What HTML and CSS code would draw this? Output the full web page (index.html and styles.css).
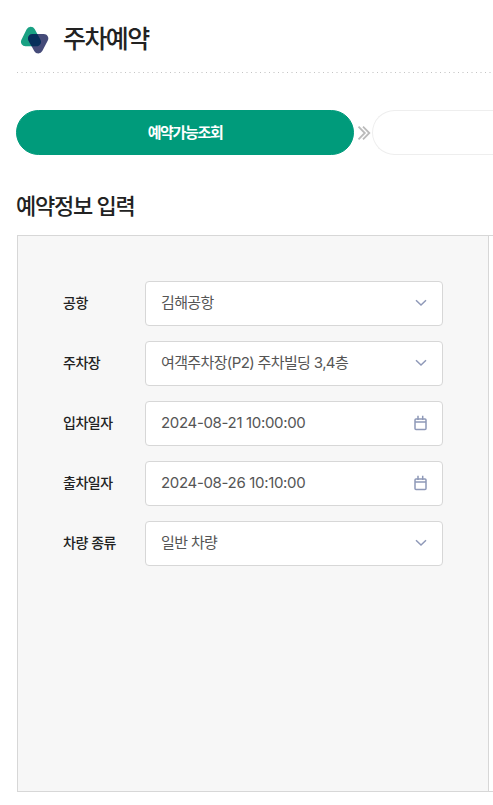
FILE: index.html
```
<!DOCTYPE html>
<html lang="ko">
<head>
    <meta charset="UTF-8" />
    <meta name="viewport" content="width=device-width, initial-scale=1.0" />
    <title>주차예약</title>
    <link rel="stylesheet" href="styles.css">
</head>
<body>
    <div class="container">
        <header class="header">
            <svg class="logo" width="30" height="31" viewBox="0 0 30 31">
                <defs>
                    <clipPath id="front"><path d="M12.500 11 H23.800 A4.500 4.500 0 0 1 27.800 17.600 L22.300 28.100 A4.500 4.500 0 0 1 14.360 28.200 L8.560 17.700 A4.500 4.500 0 0 1 12.500 11Z" /></clipPath>
                </defs>
                <path d="M1.450 16.800 L6.650 6.200 A4.500 4.500 0 0 1 14.650 6.040 L20.450 16.640 A4.500 4.500 0 0 1 16.500 23.300 H5.500 A4.500 4.500 0 0 1 1.450 16.800Z" fill="#19a183" />
                <path d="M12.500 11 H23.800 A4.500 4.500 0 0 1 27.800 17.600 L22.300 28.100 A4.500 4.500 0 0 1 14.360 28.200 L8.560 17.700 A4.500 4.500 0 0 1 12.500 11Z" fill="#454b79" />
                <path d="M1.450 16.800 L6.650 6.200 A4.500 4.500 0 0 1 14.650 6.040 L20.450 16.640 A4.500 4.500 0 0 1 16.500 23.300 H5.500 A4.500 4.500 0 0 1 1.450 16.800Z" fill="#062f5b" clip-path="url(#front)" />
            </svg>
            <h1>주차예약</h1>
        </header>

        <div class="steps">
            <div class="step active">예약가능조회</div>
            <svg class="arrow" width="15" height="14" viewBox="0 0 15 14">
                <path d="M1.500 .7 L7.800 7 L1.500 13.300 M6 .7 L12.300 7 L6 13.300" />
            </svg>
            <div class="step"></div>
        </div>

        <h2>예약정보 입력</h2>
        <div class="panel">
            <form class="form">
                <div class="row">
                    <label>공항</label>
                    <div class="field"><span>김해공항</span>
                        <svg class="chevron" width="12" height="8" viewBox="0 0 12 8"><path d="M1 1.200 L6 6 L11 1.200" /></svg>
                    </div>
                </div>
                <div class="row">
                    <label>주차장</label>
                    <div class="field"><span>여객주차장(P2) 주차빌딩 3,4층</span>
                        <svg class="chevron" width="12" height="8" viewBox="0 0 12 8"><path d="M1 1.200 L6 6 L11 1.200" /></svg>
                    </div>
                </div>
                <div class="row">
                    <label>입차일자</label>
                    <div class="field date"><span>2024-08-21 10:00:00</span>
                        <svg class="calendar" width="14" height="16" viewBox="0 0 14 16"><path d="M3 4 H12 Q13 4 13 5 V13.500 Q13 14.500 12 14.500 H3 Q2 14.500 2 13.500 V5 Q2 4 3 4Z M2 7 H13 M5 .8 V5 M9.700 .8 V5" /></svg>
                    </div>
                </div>
                <div class="row">
                    <label>출차일자</label>
                    <div class="field date"><span>2024-08-26 10:10:00</span>
                        <svg class="calendar" width="14" height="16" viewBox="0 0 14 16"><path d="M3 4 H12 Q13 4 13 5 V13.500 Q13 14.500 12 14.500 H3 Q2 14.500 2 13.500 V5 Q2 4 3 4Z M2 7 H13 M5 .8 V5 M9.700 .8 V5" /></svg>
                    </div>
                </div>
                <div class="row">
                    <label>차량 종류</label>
                    <div class="field"><span>일반 차량</span>
                        <svg class="chevron" width="12" height="8" viewBox="0 0 12 8"><path d="M1 1.200 L6 6 L11 1.200" /></svg>
                    </div>
                </div>
            </form>
        </div>
    </div>
</body>
</html>
```
FILE: styles.css
```
* {
    box-sizing: border-box;
}

body {
    font-family: "Inter", "Noto Sans CJK KR", sans-serif;
    background-color: #fff;
    color: #222;
    margin: 0;
}

.container {
    padding-left: 16px;
    overflow: hidden;
}

.header {
    display: flex;
    align-items: center;
    height: 73px;
    padding: 4px 0 0 4px;
    /* dotted line under the title */
    background: repeating-linear-gradient(90deg, #fff 0 1px, #c4c4c4 1px 2px, #fff 2px 5px, #dedede 5px 7px, #fff 7px 9px) 0 72px / 100% 1px no-repeat;
}

h1 {
    font-size: 25px;
    font-weight: 500;
    letter-spacing: -1.6px;
    line-height: 36px;
    margin: 0 0 0 13px;
}

.steps {
    display: flex;
    align-items: center;
    margin-top: 37px;
}

.step {
    flex: 0 0 338px;
    height: 45px;
    border: 1px solid #eee;
    border-radius: 23px;
    text-align: center;
    line-height: 43px;
}

/* the second step runs on to the right edge */
.step:last-child {
    flex: 1;
    border-right: none;
    border-radius: 23px 0 0 23px;
}

.step.active {
    background-color: #009b7b;
    border-color: #009b7b;
    color: #fff;
    font-size: 15px;
    font-weight: 700;
    letter-spacing: -1.35px;
}

.arrow {
    flex: none;
    margin-left: 3px;
    fill: none;
    stroke: #bbb;
    stroke-width: 1.8;
}

h2 {
    font-size: 22px;
    font-weight: 500;
    letter-spacing: -1.25px;
    line-height: 32px;
    margin: 35px 0 13px;
}

.panel {
    height: 557px;
    margin-left: 1px;
    border: 1px solid #d7d7d7;
    border-right: none;
}

.form {
    width: 471px;
    height: 100%;
    padding: 45px 45px 0;
    background-color: #f7f7f7;
    border-right: 1px solid #d7d7d7;
}

.row {
    display: flex;
    align-items: center;
    margin-bottom: 15px;
}

label {
    width: 82px;
    padding-bottom: 4px;
    font-size: 14px;
    font-weight: 500;
    letter-spacing: -0.45px;
}

.field {
    display: flex;
    align-items: center;
    justify-content: space-between;
    width: 298px;
    height: 45px;
    padding: 0 15px;
    background-color: #fff;
    border: 1px solid #d7d7d7;
    border-radius: 4px;
    color: #555;
    font-size: 15px;
    letter-spacing: -0.63px;
}

.field span {
    padding-bottom: 5px;
}

.field.date {
    letter-spacing: -0.33px;
}

.field.date span {
    padding-bottom: 2px;
}

.field svg {
    fill: none;
    stroke: #8f99b8;
    stroke-width: 1.5;
}

.field .chevron {
    margin-bottom: 1px;
}

.field .calendar {
    margin-bottom: 1px;
}
```
